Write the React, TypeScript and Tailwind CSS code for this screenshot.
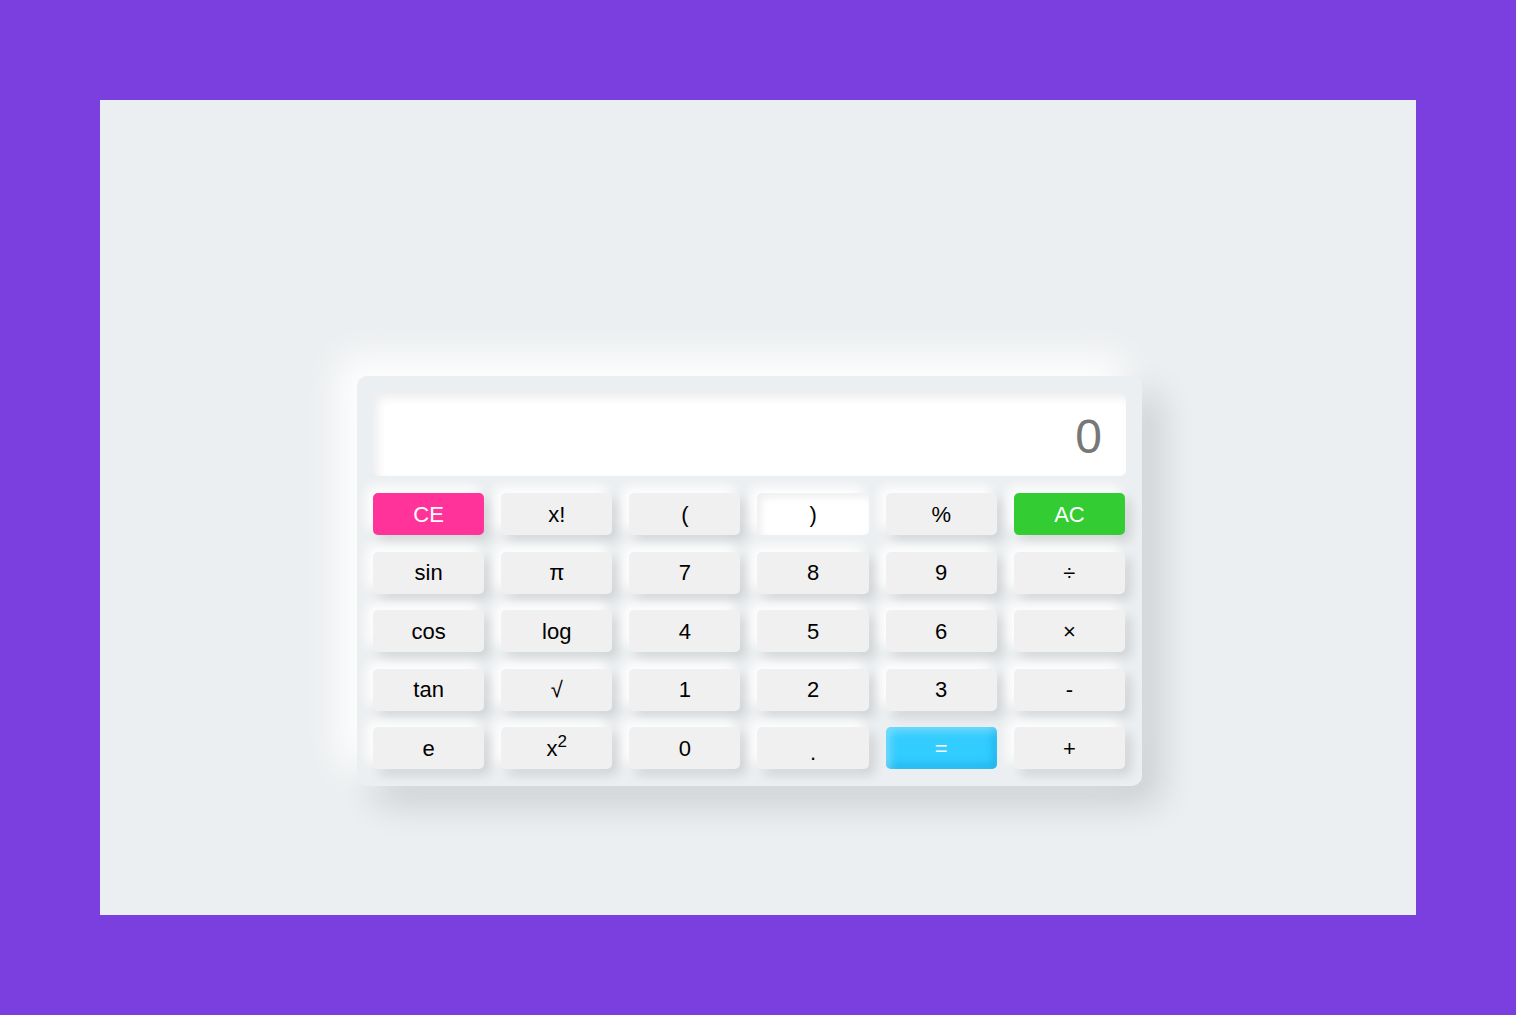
const rows: string[][] = [
  ['CE', 'x!', '(', ')', '%', 'AC'],
  ['sin', 'π', '7', '8', '9', '÷'],
  ['cos', 'log', '4', '5', '6', '×'],
  ['tan', '√', '1', '2', '3', '-'],
  ['e', 'x2', '0', '.', '=', '+'],
]

const base =
  'h-[42px] rounded-[5px] flex items-center justify-center text-[22px] leading-none pt-[1px]'

function keyClass(label: string) {
  switch (label) {
    case 'CE':
      return `${base} bg-[#ff3399] text-white shadow-[-6px_-6px_12px_#ffffff,6px_6px_12px_rgba(0,0,0,0.12)]`
    case 'AC':
      return `${base} bg-[#33cc33] text-white shadow-[-6px_-6px_12px_#ffffff,6px_6px_12px_rgba(0,0,0,0.12)]`
    case '=':
      return `${base} bg-[#33ccff] text-white shadow-[inset_4px_4px_8px_rgba(255,255,255,0.35),inset_-4px_-4px_8px_rgba(0,150,210,0.45)]`
    case ')':
      return `${base} bg-white text-black shadow-[inset_4px_4px_8px_rgba(0,0,0,0.07),-6px_-6px_12px_#ffffff]`
    default:
      return `${base} bg-[#f0f0f0] text-black shadow-[-6px_-6px_12px_#ffffff,6px_6px_12px_rgba(0,0,0,0.12)]`
  }
}

export default function App() {
  return (
    <div
      className="min-h-[1015px] bg-[#7b3fdf] p-[100px]"
      style={{ fontFamily: '"Liberation Sans", Arial, sans-serif' }}
    >
      <div className="h-[815px] bg-[#eceff1] pl-[257px] pt-[276px]">
        <div className="w-[785px] rounded-[10px] bg-[#eceff1] pl-4 pr-4 pt-[17px] pb-[17px] shadow-[-18px_-18px_36px_#ffffff,18px_18px_36px_rgba(0,0,0,0.14)]">
          <div className="h-[83px] rounded-[6px] bg-white flex items-center justify-end pr-6 shadow-[inset_5px_5px_10px_rgba(0,0,0,0.07)]">
            <span className="text-[48px] text-[#777777] leading-none pt-1">0</span>
          </div>
          <div className="mt-[17px] mr-px grid grid-cols-6 gap-x-[17px] gap-y-[16.5px]">
            {rows.flat().map((k) => (
              <button key={k} className={keyClass(k)}>
                {k === 'x2' ? (
                  <span className="relative">
                    x<span className="text-[17px] relative -top-[9px]">2</span>
                  </span>
                ) : k === '.' ? (
                  <span className="pt-2">.</span>
                ) : (
                  k
                )}
              </button>
            ))}
          </div>
        </div>
      </div>
    </div>
  )
}
